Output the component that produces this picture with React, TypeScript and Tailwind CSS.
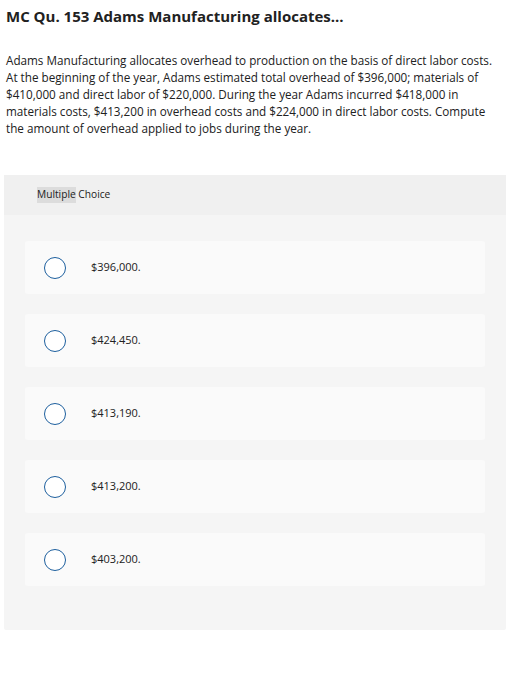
const options = ['$396,000.', '$424,450.', '$413,190.', '$413,200.', '$403,200.'];

export default function App() {
  return (
    <div className="min-h-screen bg-white text-[#212121]" style={{ fontFamily: '"Open Sans", sans-serif' }}>
      <div className="px-[6px] pt-[6px]">
        <h1 className="text-[15px] font-bold leading-[20px]">MC Qu. 153 Adams Manufacturing allocates...</h1>
        <p className="mt-[26px] text-[11.7px] leading-[17px] whitespace-nowrap">
          Adams Manufacturing allocates overhead to production on the basis of direct labor costs.
          <br />
          At the beginning of the year, Adams estimated total overhead of $396,000; materials of
          <br />
          $410,000 and direct labor of $220,000. During the year Adams incurred $418,000 in
          <br />
          materials costs, $413,200 in overhead costs and $224,000 in direct labor costs. Compute
          <br />
          the amount of overhead applied to jobs during the year.
        </p>
      </div>

      <div className="mx-[4px] mt-[38px] w-[502px] rounded-[2px] bg-[#f5f5f5] pb-[44px]">
        <div className="flex h-[40px] items-center bg-[#f0f0f0] pl-[33px] text-[10.2px] text-[#212121]">
          <span className="bg-[#dcdcdc]">Multiple</span>
          <span>&nbsp;Choice</span>
        </div>
        <div className="flex flex-col gap-[20px] px-[21px] pt-[26px]">
          {options.map((opt) => (
            <div key={opt} className="flex h-[53px] items-center rounded-[3px] bg-[#fafafa]">
              <span className="ml-[19px] h-[22px] w-[22px] rounded-full border border-[#1d5f9e] bg-white" />
              <span className="ml-[25px] text-[11px]">{opt}</span>
            </div>
          ))}
        </div>
      </div>
    </div>
  );
}
